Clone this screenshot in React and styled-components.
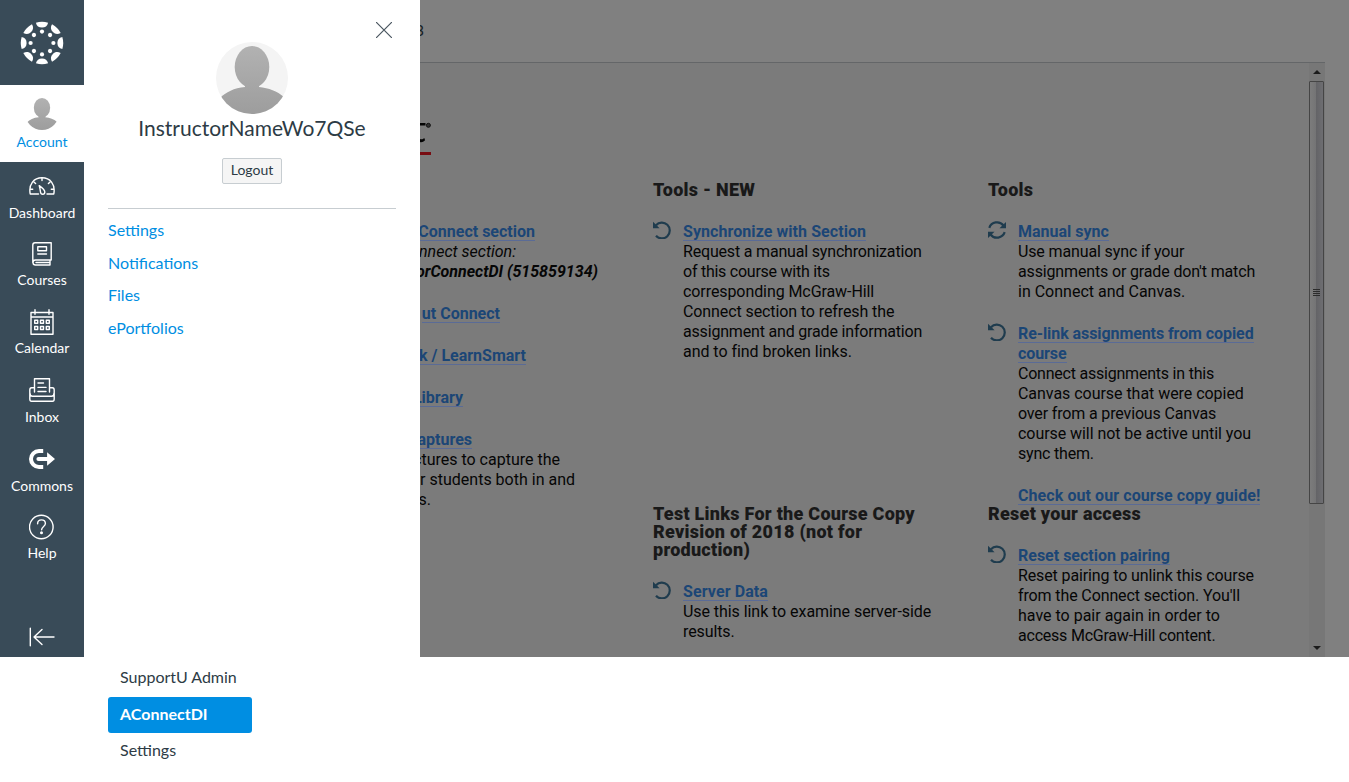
import React from "react";
import styled, { createGlobalStyle } from "styled-components";

const Global = createGlobalStyle`
  *, *::before, *::after { box-sizing: border-box; }
  html, body { margin: 0; background: #fff; overflow: hidden; }
  body { font-family: Lato, "Open Sans", sans-serif; color: #2d3b45; }
  svg { display: block; flex: none; }
  a { text-decoration: none; }
`;

const Page = styled.div`
  width: 1349px;
  height: 782px;
  overflow: hidden;
`;

const Viewport = styled.div`
  display: flex;
  height: 657px;
`;

/* ---------- global navigation ---------- */

const Nav = styled.nav`
  flex: none;
  width: 84px;
  display: flex;
  flex-direction: column;
  background: #394b58;
`;

const LogoLink = styled.a`
  height: 85px;
  display: flex;
  justify-content: center;
  padding-top: 21px;
`;

const NavItem = styled.a`
  height: ${(p) => p.$height}px;
  padding-top: 11px;
  display: flex;
  flex-direction: column;
  align-items: center;
  gap: ${(p) => p.$gap}px;
  font-size: 14px;
  line-height: 17px;
  color: ${(p) => (p.$active ? "#008ee2" : "#fff")};
  background: ${(p) => (p.$active ? "#fff" : "transparent")};
`;

const NavIcon = styled.span`
  height: ${(p) => p.$height || 26}px;
  display: flex;
  align-items: center;
`;

const Collapse = styled.a`
  margin-top: auto;
  padding: 0 0 10px 29px;
`;

/* ---------- account tray ---------- */

const Tray = styled.aside`
  flex: none;
  width: 336px;
  padding: 22px 24px 0;
  display: flex;
  flex-direction: column;
  background: #fff;
`;

const Close = styled.a`
  align-self: flex-end;
  height: 20px;
  padding-right: 4px;
`;

const Profile = styled.div`
  display: flex;
  flex-direction: column;
  align-items: center;
  height: 167px;
  border-bottom: 1px solid #c7cdd1;
`;

const UserName = styled.h2`
  margin: 0 0 17px;
  font-size: 21px;
  font-weight: 400;
  line-height: 27px;
`;

const Logout = styled.button`
  width: 60px;
  height: 26px;
  padding: 0 0 2px;
  border: 1px solid #c7cdd1;
  border-radius: 2px;
  background: #f5f5f5;
  font: 400 14px/20px Lato, sans-serif;
  color: #2d3b45;
`;

const TrayLinks = styled.div`
  display: flex;
  flex-direction: column;
  padding-top: 9px;
`;

const TrayLink = styled.a`
  height: 32.6px;
  font-size: 16px;
  line-height: 24px;
  color: #008ee2;
`;

/* ---------- dimmed course page ---------- */

const Main = styled.main`
  flex: none;
  width: 929px;
  overflow: hidden;
  background: #808080;
`;

const Crumbs = styled.header`
  width: 905px;
  height: 63px;
  border-bottom: 1px solid #646668;
  font-size: 16px;
  line-height: 60px;
  color: #171e23;
`;

const Frame = styled.div`
  width: 905px;
  height: 594px;
  display: flex;
  background: #7b7b7b;
`;

const FrameBody = styled.div`
  width: 889px;
  font-family: Roboto, sans-serif;
  color: #060606;
`;

const Brand = styled.div`
  height: 118px;
  padding-top: 58px;
`;

const Columns = styled.div`
  display: grid;
  grid-template-columns: 233px 335px 300px;
  grid-template-rows: 324px 152px;
`;

const Cell = styled.section`
  grid-column: ${(p) => p.$col};
  white-space: nowrap;
`;

const Heading = styled.h3`
  margin: 0 0 23px;
  font-size: 18px;
  font-weight: 900;
  line-height: 18px;
  letter-spacing: 0.26px;
  color: #191919;
`;

const Entry = styled.div`
  display: flex;
  gap: 12px;
  margin-bottom: 22px;
  font-size: 16px;
  line-height: 20px;
`;

const EntryIcon = styled.span`
  flex: none;
  width: 18px;
  margin-top: -1px;
  color: #1f3c4e;
`;

const Link = styled.a`
  font-weight: 700;
  color: #1b4676;
  background: linear-gradient(#5a6b96, #5a6b96) 0 100% / 100% 1px no-repeat;
`;

const Line = styled.div`
  height: 20px;
  letter-spacing: ${(p) => p.$track || 0}px;
`;

const Tail = styled.div`
  display: flex;
  justify-content: flex-end;
  white-space: nowrap;
  width: ${(p) => p.$end}px;
  height: ${(p) => p.$height || 20}px;
  font-style: ${(p) => (p.$italic ? "italic" : "normal")};
  font-weight: ${(p) => (p.$bold ? 700 : 400)};
`;

const LeftColumn = styled.div`
  padding-top: 41px;
  font-size: 16px;
  line-height: 20px;
`;

const Group = styled.div`
  margin-bottom: 22px;
`;

/* ---------- scroll bar ---------- */

const Track = styled.div`
  width: 16px;
  display: flex;
  flex-direction: column;
  background: #777;
`;

const Arrow = styled.span`
  flex: none;
  height: 18px;
  display: flex;
  align-items: center;
  justify-content: center;
  margin-top: ${(p) => (p.$down ? "auto" : 0)};
`;

const Thumb = styled.div`
  flex: none;
  width: 15px;
  height: 423px;
  display: flex;
  flex-direction: column;
  align-items: center;
  justify-content: center;
  gap: 1px;
  border: 1px solid #454545;
  border-radius: 1px;
  background: linear-gradient(90deg, #7c7c7c, #747475 45%, #646467 50%, #6e6e72 100%);
`;

const Grip = styled.i`
  width: 7px;
  height: 1px;
  background: #2c2c2c;
`;

/* ---------- section menu ---------- */

const Menu = styled.div`
  display: flex;
  flex-direction: column;
  width: 144px;
  margin-left: 108px;
  padding-top: 3px;
`;

const MenuItem = styled.a`
  height: 36px;
  margin-bottom: ${(p) => (p.$active ? 0 : 1)}px;
  padding-left: 12px;
  border-radius: 3px;
  font-size: 16px;
  line-height: 33px;
  font-weight: ${(p) => (p.$active ? 700 : 400)};
  color: ${(p) => (p.$active ? "#fff" : "#2d3b45")};
  background: ${(p) => (p.$active ? "#008ee2" : "transparent")};
`;

/* ---------- drawings ---------- */

const CanvasMark = () => (
  <svg width="44" height="44" viewBox="-22 -22 44 44" fill="#fff">
    {[0, 45, 90, 135, 180, 225, 270, 315].map((a) => (
      <g key={a} transform={`rotate(${a})`}>
        <path d="M-6.100-20.300Q0-22.200 6.100-20.300C5.300-17 3.300-15.400 0-15.400S-5.300-17-6.100-20.300Z" />
        <circle cy="-11.400" r="2.100" />
      </g>
    ))}
  </svg>
);

const Person = ({ size, disc, id }) => (
  <svg width={size} height={size} viewBox="0 0 72 72">
    <defs>
      <clipPath id={`${id}-clip`}><circle cx="36" cy="36" r="36" /></clipPath>
      <linearGradient id={`${id}-fill`} x1="0" y1="0" x2="0" y2="72" gradientUnits="userSpaceOnUse">
        <stop offset="0" stopColor="#b3b3b3" />
        <stop offset="1" stopColor="#9d9d9d" />
      </linearGradient>
    </defs>
    {disc && <circle cx="36" cy="36" r="36" fill="#f4f4f4" />}
    <g clipPath={`url(#${id}-clip)`} fill={`url(#${id}-fill)`}>
      <ellipse cx="36" cy="25" rx="17.300" ry="21" />
      <path d="M29 42v3C18 46 10 50 4 56v18h64V55C61 49 53 46 43 45v-3Z" />
    </g>
  </svg>
);

const line = { fill: "none", stroke: "#fff", strokeWidth: 1.4, strokeLinejoin: "round", strokeLinecap: "round" };

const DashboardIcon = () => (
  <svg width="26" height="18" viewBox="0 0 26 18" {...line}>
    <path d="M9.500 17H1.200C-.6 7 5 .8 13 .8S26.600 7 24.800 17H18" />
    <path d="M13 1v2.600M4.900 4.900l1.700 1.600M21.100 4.900l-1.700 1.600M1.400 12.200h2.300M24.600 12.200h-2.300" />
    <path d="M10.200 8.600c2 1.400 5.600 4.400 5.600 6.400 0 3-4 3-4.300 0-.2-2-.8-4.600-1.300-6.400Z" />
  </svg>
);

const CoursesIcon = () => (
  <svg width="20" height="24" viewBox="0 0 20 24" {...line}>
    <path d="M19.200 18H3.500a2.500 2.500 0 0 0 0 5H18M.8 20.500V3C.8 1.600 1.600.8 3 .8H19.200V18M18 18v5M4 20.500h14" />
    <path d="M5.800 4.800h8.700v4H5.800ZM5.800 12h8.700" />
  </svg>
);

const CalendarIcon = () => (
  <svg width="24" height="26" viewBox="0 0 24 26" {...line}>
    <path d="M1 3.500h22v21.700H1ZM1 8h22M5 .8v4.400M19 .8v4.400" />
    <path d="M4.700 11.300h3v3h-3ZM10.500 11.300h3v3h-3ZM16.300 11.300h3v3h-3ZM4.700 17.500h3v3h-3ZM10.500 17.500h3v3h-3ZM16.300 17.500h3v3h-3Z" />
  </svg>
);

const InboxIcon = () => (
  <svg width="26" height="24" viewBox="0 0 26 24" {...line}>
    <path d="M5.500 14V.8h15V14M9 5h5.500M9 9.400h8M9 13.500h8" />
    <path d="M5.300 9.800H2.500C1.400 9.800.8 10.600.8 12v9c0 1.400.6 2.200 1.700 2.200h21c1.100 0 1.700-.8 1.700-2.200v-9c0-1.400-.6-2.200-1.700-2.200h-2.800M1 15.300c0 2 .7 3 2.500 3h19c1.800 0 2.500-1 2.500-3" />
  </svg>
);

const CommonsIcon = () => (
  <svg width="26" height="20" viewBox="0 0 26 20" fill="#fff">
    <path d="M14.200 0v4H10a6 6 0 0 0 0 12h4.200v4H10A10 10 0 0 1 10 0Z" />
    <path d="M9.500 7.900h8.600V3.300L26 10l-7.900 6.700v-4.600H9.500a2.100 2.100 0 0 1 0-4.200Z" />
  </svg>
);

const HelpIcon = () => (
  <svg width="26" height="26" viewBox="0 0 26 26" {...line}>
    <circle cx="12.300" cy="13" r="11.800" />
    <path d="M8.600 9.800c0-2.300 1.500-3.900 3.900-3.900s3.900 1.500 3.900 3.600c0 2.900-3.800 3-3.800 6.200" />
    <circle cx="12.500" cy="18.800" r=".8" fill="#fff" />
  </svg>
);

const UndoIcon = () => (
  <svg width="18" height="18" viewBox="0 0 18 18">
    <path d="M3 4.200A7.900 7.900 0 1 1 3 14.800" fill="none" stroke="currentColor" strokeWidth="2.200" />
    <path d="M0 .8v6.400h6.600Z" fill="currentColor" />
  </svg>
);

const SyncIcon = () => (
  <svg width="18" height="18" viewBox="0 0 18 18">
    <path d="M1.300 6.800C3.300.8 11.500-.7 15.500 4.500M16.700 11.200c-2 6-10.200 7.500-14.200 2.300" fill="none" stroke="currentColor" strokeWidth="2.200" />
    <path d="M18 .9v6.300h-6.500ZM0 17.100v-6.300h6.500Z" fill="currentColor" />
  </svg>
);

const navItems = [
  ["Dashboard", DashboardIcon, 68, 5],
  ["Courses", CoursesIcon, 68, 4],
  ["Calendar", CalendarIcon, 68, 4],
  ["Inbox", InboxIcon, 69, 5],
  ["Commons", CommonsIcon, 68, 5],
  ["Help", HelpIcon, 68, 4],
];

const Tool = ({ icon: Icon, title, track, lines = [] }) => (
  <Entry>
    <EntryIcon>{Icon && <Icon />}</EntryIcon>
    <div>
      {title.map((text) => (
        <Line key={text} $track={track}><Link>{text}</Link></Line>
      ))}
      {lines.map(([text, spacing]) => (
        <Line key={text} $track={spacing}>{text}</Line>
      ))}
    </div>
  </Entry>
);

export default function App() {
  return (
    <Page>
      <Global />
      <Viewport>
        <Nav>
          <LogoLink><CanvasMark /></LogoLink>
          <NavItem $active $height={77} $gap={4}>
            <NavIcon $height={33}><Person size={34} id="nav" /></NavIcon>
            Account
          </NavItem>
          {navItems.map(([label, Icon, h, gap]) => (
            <NavItem key={label} $height={h} $gap={gap}>
              <NavIcon><Icon /></NavIcon>
              {label}
            </NavItem>
          ))}
          <Collapse>
            <svg width="26" height="20" viewBox="0 0 26 20" {...line}>
              <path d="M1.300 1.200v17.600M25 10H5M13 2.500 5 10l8 7.500" />
            </svg>
          </Collapse>
        </Nav>

        <Tray>
          <Close>
            <svg width="16" height="16" viewBox="0 0 16 16" fill="none" stroke="#4a5660" strokeWidth="1.200">
              <path d="M0 0l16 16M16 0L0 16" />
            </svg>
          </Close>
          <Profile>
            <Person size={72} disc id="tray" />
            <UserName>InstructorNameWo7QSe</UserName>
            <Logout>Logout</Logout>
          </Profile>
          <TrayLinks>
            <TrayLink>Settings</TrayLink>
            <TrayLink>Notifications</TrayLink>
            <TrayLink>Files</TrayLink>
            <TrayLink>ePortfolios</TrayLink>
          </TrayLinks>
        </Tray>

        <Main>
          <Crumbs><Tail $end={4} $height={62}>3</Tail></Crumbs>
          <Frame>
            <FrameBody>
              <Brand>
                <svg width="12" height="36" viewBox="0 0 12 36">
                  <path d="M0 2h5.500v2.500H0ZM0 18c2 .7 3 0 4.300-1l.8 2.300C3.500 21 1.500 21.500 0 21Z" fill="#050505" />
                  <circle cx="8.400" cy="4.300" r="2" fill="#333" stroke="#111" />
                  <path d="M0 31h11v3H0Z" fill="#780c12" />
                </svg>
              </Brand>
              <Columns>
                <Cell $col={1}>
                  <LeftColumn>
                    <Group>
                      <Tail $end={115}><span><Link>Connect section</Link></span></Tail>
                      <Tail $end={96} $italic>nnect section:</Tail>
                      <Tail $end={178} $italic $bold>orConnectDI (515859134)</Tail>
                    </Group>
                    <Group><Tail $end={80}><span><Link>ut Connect</Link></span></Tail></Group>
                    <Group><Tail $end={106}><span><Link>k / LearnSmart</Link></span></Tail></Group>
                    <Group><Tail $end={43}><span><Link>Library</Link></span></Tail></Group>
                    <Group>
                      <Tail $end={52}><span><Link>aptures</Link></span></Tail>
                      <Tail $end={140}>ctures to capture the</Tail>
                      <Tail $end={155}>or students both in and</Tail>
                      <Tail $end={11}>s.</Tail>
                    </Group>
                  </LeftColumn>
                </Cell>
                <Cell $col={2}>
                  <Heading>Tools - NEW</Heading>
                  <Tool
                    icon={UndoIcon}
                    title={["Synchronize with Section"]}
                    track={0.07}
                    lines={[
                      ["Request a manual synchronization", -0.18],
                      ["of this course with its", -0.25],
                      ["corresponding McGraw-Hill", -0.08],
                      ["Connect section to refresh the", -0.1],
                      ["assignment and grade information", -0.18],
                      ["and to find broken links.", -0.04],
                    ]}
                  />
                </Cell>
                <Cell $col={3}>
                  <Heading>Tools</Heading>
                  <Tool
                    icon={SyncIcon}
                    title={["Manual sync"]}
                    lines={[
                      ["Use manual sync if your", -0.13],
                      ["assignments or grade don't match", -0.15],
                      ["in Connect and Canvas.", 0],
                    ]}
                  />
                  <Tool
                    icon={UndoIcon}
                    title={["Re-link assignments from copied", "course"]}
                    track={-0.08}
                    lines={[
                      ["Connect assignments in this", -0.22],
                      ["Canvas course that were copied", -0.04],
                      ["over from a previous Canvas", -0.15],
                      ["course will not be active until you", -0.06],
                      ["sync them.", -0.2],
                    ]}
                  />
                  <Tool title={["Check out our course copy guide!"]} track={0.08} />
                </Cell>
                <Cell $col={2}>
                  <Heading>
                    Test Links For the Course Copy<br />Revision of 2018 (not for<br />production)
                  </Heading>
                  <Tool
                    icon={UndoIcon}
                    title={["Server Data"]}
                    track={0.1}
                    lines={[
                      ["Use this link to examine server-side", -0.06],
                      ["results.", -0.1],
                    ]}
                  />
                </Cell>
                <Cell $col={3}>
                  <Heading>Reset your access</Heading>
                  <Tool
                    icon={UndoIcon}
                    title={["Reset section pairing"]}
                    lines={[
                      ["Reset pairing to unlink this course", -0.12],
                      ["from the Connect section. You'll", -0.12],
                      ["have to pair again in order to", 0],
                      ["access McGraw-Hill content.", -0.22],
                    ]}
                  />
                </Cell>
              </Columns>
            </FrameBody>
            <Track>
              <Arrow>
                <svg width="8" height="4" viewBox="0 0 8 4"><path d="M0 4 4 0l4 4Z" fill="#1c1c1c" /></svg>
              </Arrow>
              <Thumb><Grip /><Grip /><Grip /><Grip /></Thumb>
              <Arrow $down>
                <svg width="8" height="4" viewBox="0 0 8 4"><path d="M0 0h8L4 4Z" fill="#1c1c1c" /></svg>
              </Arrow>
            </Track>
          </Frame>
        </Main>
      </Viewport>

      <Menu>
        <MenuItem>SupportU Admin</MenuItem>
        <MenuItem $active>AConnectDI</MenuItem>
        <MenuItem>Settings</MenuItem>
      </Menu>
    </Page>
  );
}
